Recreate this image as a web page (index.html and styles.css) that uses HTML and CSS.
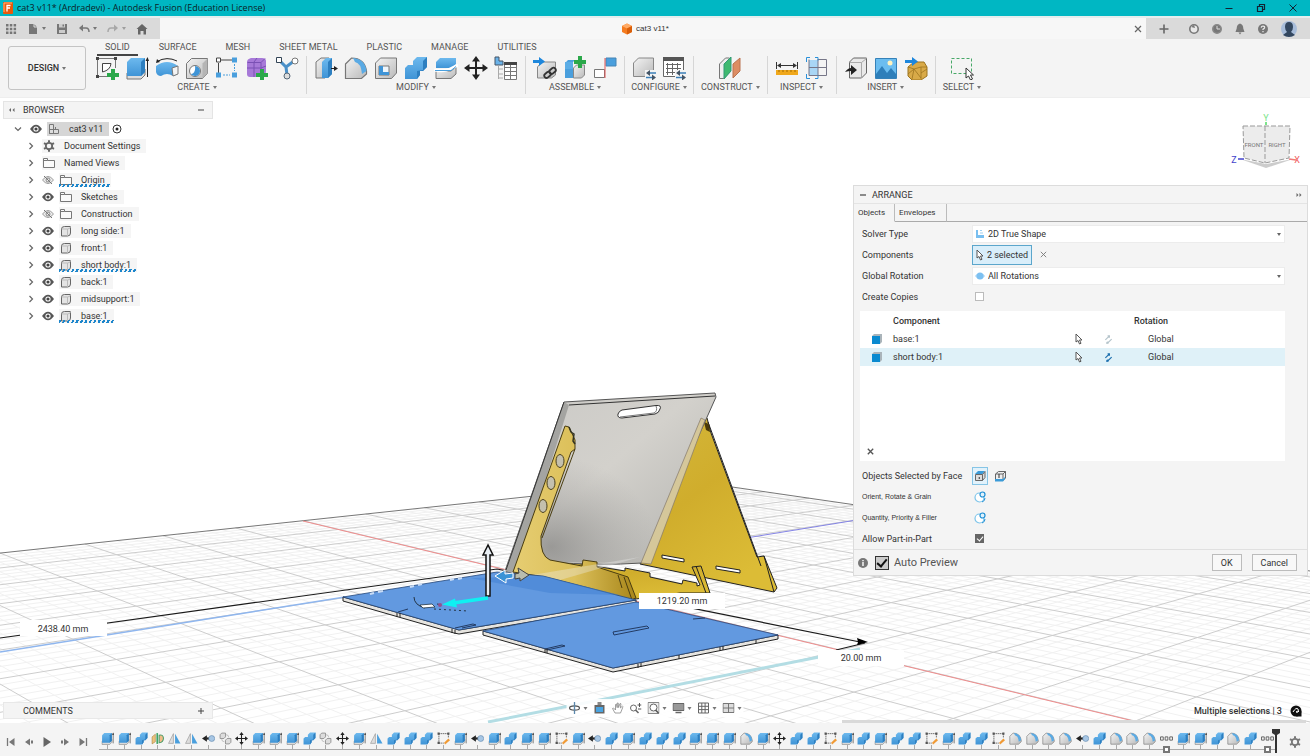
FILE: index.html
```
<!DOCTYPE html>
<html lang="en">
<head>
  <meta charset="UTF-8" />
  <meta name="viewport" content="width=device-width, initial-scale=1.0" />
  <title>cat3 v11* - Autodesk Fusion</title>
  <link rel="stylesheet" href="styles.css">
</head>
<body>
  <svg class="defs" aria-hidden="true">
    <defs>
      <linearGradient id="gBlue" x1="0" y1="0" x2="0" y2="1"><stop offset="0" stop-color="#6db9ee"/><stop offset="1" stop-color="#3f94d6"/></linearGradient>
      <linearGradient id="gGray" x1="0" y1="0" x2="1" y2="1"><stop offset="0" stop-color="#f4f4f4"/><stop offset="1" stop-color="#b9b9b9"/></linearGradient>
      <linearGradient id="gPanel" x1="0" y1="0" x2="1" y2="1"><stop offset="0" stop-color="#cac9c6"/><stop offset=".45" stop-color="#d3d1cc"/><stop offset=".8" stop-color="#bdbcb8"/><stop offset="1" stop-color="#a5a4a1"/></linearGradient>
      <linearGradient id="gYellow" x1="0" y1="0" x2=".6" y2="1"><stop offset="0" stop-color="#d4b83c"/><stop offset=".5" stop-color="#d0ad2c"/><stop offset="1" stop-color="#dcbc36"/></linearGradient>
      <linearGradient id="gSide" x1="0" y1="0" x2="1" y2="0"><stop offset="0" stop-color="#e6cd72"/><stop offset=".5" stop-color="#dcc05a"/><stop offset="1" stop-color="#a8861a"/></linearGradient>
      <radialGradient id="gShade" cx=".22" cy=".85" r=".5"><stop offset="0" stop-color="#666" stop-opacity=".5"/><stop offset="1" stop-color="#888" stop-opacity="0"/></radialGradient>
    </defs>

    <!-- ribbon -->
    <symbol id="i-sketch" viewBox="0 0 24 24"><path d="M2 2.500H20.500V12M2.500 2.500V21M2.500 20.500H13" fill="none" stroke="#777"/><path d="M1 1h3v3H1zM19 1h3v3h-3zM1 19h3v3H1z" fill="#444"/><path d="M7.500 16V7.500H16Q15.500 14 7.500 16z" fill="#fff" stroke="#444"/><path d="M16 13h4v4h4v4h-4v4h-4v-4h-4v-4h4z" fill="#2ba84a"/></symbol>
    <symbol id="i-extrude" viewBox="0 0 24 24"><path d="M2 17h15l3-4v6l-4 4H2z" fill="#ddd" stroke="#777"/><path d="M2 6l4-4h14v14l-4 4H2z" fill="url(#gBlue)"/><path d="M16 6l4-4v14l-4 4z" fill="#2d7fc0"/><path d="M22.500 21V3" stroke="#222"/><path d="M20.500 5l2-4 1.500 4z" fill="#222"/></symbol>
    <symbol id="i-revolve" viewBox="0 0 24 24"><path d="M1 10Q12 2 23 10v7q-2 3-5 3-6-4-12 0-4 0-5-4z" fill="url(#gBlue)"/><path d="M17 12l6-2v8l-5 2z" fill="#f3f3f3" stroke="#777"/><path d="M2 5.500Q12 0 22 5" fill="none" stroke="#222"/><path d="M2 3l-1 4 4-1z" fill="#222"/></symbol>
    <symbol id="i-hole" viewBox="0 0 24 24"><path d="M1.500 7.500l5-5h16v15l-5 5h-16z" fill="url(#gGray)" stroke="#777"/><path d="M17.500 7.500l5-5v15l-5 5z" fill="#b5b5b5"/><circle cx="10" cy="15" r="5.500" fill="#fff" stroke="#777"/><path d="M10 10a5 5 0 1 1-4 8q5-1 4-8z" fill="#3f94d6"/></symbol>
    <symbol id="i-pattern" viewBox="0 0 24 24"><path d="M6 4h12M3.500 7v11" stroke="#444" fill="none"/><path d="M1.500 2h4v4h-4z" fill="#fff" stroke="#444"/><path d="M17 1.500h5v5h-5zM17 16.500h5v5h-5zM1 16.500h5v5H1z" fill="#4a9fdd"/><path d="M8 19h7M19.500 8v7" stroke="#4a9fdd" stroke-dasharray="2 1"/></symbol>
    <symbol id="i-form" viewBox="0 0 24 24"><path d="M2 6q0-3 4-4h11q4 0 4 3v10q0 5-5 6H5q-3 0-3-3z" fill="#a779d8"/><path d="M2 12h14l5-2M9 6v15M2.500 6.500H16l4-4M16 6.500V20M9 6l3-4" stroke="#7a50b4" fill="none"/><path d="M15 13h4v4h4v4h-4v4h-4v-4h-4v-4h4z" fill="#2ba84a"/></symbol>
    <symbol id="i-branch" viewBox="0 0 24 24"><path d="M4 4l7 7 8-6M11 11l1 8" fill="none" stroke="#4a90c8" stroke-width="3"/><path d="M1.500 1.500h5v5h-5z" fill="#fff" stroke="#345"/><circle cx="20" cy="5" r="3" fill="#fff" stroke="#777"/><circle cx="12" cy="20" r="3" fill="#ddd" stroke="#567"/></symbol>
    <symbol id="i-press" viewBox="0 0 24 24"><path d="M2 6l5-4h8v16l-4 4H2z" fill="url(#gGray)" stroke="#777"/><path d="M8 6l4-4h6v16l-4 4H8z" fill="url(#gBlue)"/><path d="M14 6l4-4v16l-4 4z" fill="#2d7fc0"/><path d="M17 12.500h5" stroke="#222"/><path d="M20 10l4 2.500-4 2.500z" fill="#222"/></symbol>
    <symbol id="i-fillet" viewBox="0 0 24 24"><path d="M1.500 8l6-6q13 0 15 13v3l-5 4.500h-16z" fill="url(#gGray)" stroke="#777" stroke-width="1.200"/><path d="M9 2q12 1 13.500 13l-4.500 3Q17 7 11 6z" fill="#5aaae4"/></symbol>
    <symbol id="i-shell" viewBox="0 0 24 24"><path d="M1.500 7l5-5h16v15l-5 5.500h-16z" fill="url(#gGray)" stroke="#777"/><path d="M5 10h10v9H5z" fill="#eef6fc" stroke="#777"/><path d="M5 10h4v6h6v3H5z" fill="#3f94d6"/></symbol>
    <symbol id="i-combine" viewBox="0 0 24 24"><path d="M1 12l3-3h5V5l4-4h10v10l-4 4h-3v4l-3 4H1z" fill="url(#gBlue)"/><path d="M19 5l4-4v10l-4 4h-3v4l-3 4v-8l6-1z" fill="#2d7fc0"/></symbol>
    <symbol id="i-split" viewBox="0 0 24 24"><path d="M2 6l4-4h16v6l-4 4H2z" fill="url(#gBlue)"/><path d="M2 15h15l5-4v7l-5 4.500H2z" fill="url(#gGray)" stroke="#777"/><path d="M0 14q10 2 16-1t8-4" fill="none" stroke="#fff" stroke-width="3"/><path d="M1 14.500h16l5-4" fill="none" stroke="#4a9fdd"/></symbol>
    <symbol id="i-move" viewBox="0 0 24 24"><path d="M12 4v16M4 12h16" stroke="#222" stroke-width="2"/><path d="M12 0l4 5.500H8zM12 24l4-5.500H8zM0 12l5.500-4v8zM24 12l-5.500-4v8z" fill="#222"/></symbol>
    <symbol id="i-params" viewBox="0 0 24 24"><path d="M1 1h4v4h4v4H1z" fill="#6ab2e8" stroke="#456"/><path d="M4.500 10v13M4.500 13H9M4.500 18H9M4.500 22H9" stroke="#aaa" fill="none"/><path d="M10.500 7.500h12v16h-12zM10.500 11.500h12M10.500 15.500h12M10.500 19.500h12M16.500 9v14" fill="#fff" stroke="#777"/><path d="M10 6h13v3H10z" fill="#444"/></symbol>
    <symbol id="i-link" viewBox="0 0 24 24"><path d="M4.500 11l4-5h14v13l-4 3h-14z" fill="url(#gGray)" stroke="#888"/><path d="M0 4h6V1l6 4.500L6 10V7H0z" fill="#1e87dc"/><g fill="none" stroke="#333" stroke-width="1.800"><rect x="11" y="17" width="7" height="4.500" rx="2.200" transform="rotate(-40 14 19)"/><rect x="16" y="13" width="7" height="4.500" rx="2.200" transform="rotate(-40 19 15)"/></g></symbol>
    <symbol id="i-newcomp" viewBox="0 0 24 24"><path d="M2 7l3-3h7l-3 3v6H2z" fill="#4a9fdd"/><path d="M2 6h8v7H2z" fill="#5cade6"/><path d="M2 13h8v9H2z" fill="#4a9fdd"/><path d="M10.500 12l3-3h8v10l-3 3h-8z" fill="url(#gGray)" stroke="#888"/><path d="M15 0h4v4h4v4h-4v4h-4V8h-4V4h4z" fill="#2ba84a"/></symbol>
    <symbol id="i-joint" viewBox="0 0 24 24"><path d="M1.500 13.500h10v8h-10z" fill="#fff" stroke="#777"/><path d="M13 2h10v8H13z" fill="#4a9fdd" stroke="#4785b5"/><path d="M12 2v20" stroke="#e25555"/></symbol>
    <symbol id="i-config" viewBox="0 0 24 24"><path d="M1.500 7l5-5h15v12l-5 6.500h-15z" fill="url(#gGray)" stroke="#888"/><path d="M13 14h11v10H13z" fill="#f4f4f4"/><path d="M16 17h8M14 21.500h7" stroke="#3a7fb8" stroke-width="1.500"/><path d="M14 17l4-3v6zM24 21.500l-4-3v6z" fill="#456"/></symbol>
    <symbol id="i-table" viewBox="0 0 24 24"><path d="M1.500 1.500h20v19h-20z" fill="#fff" stroke="#666"/><path d="M1 1h21v4H1z" fill="#555"/><path d="M4 8.500h15M4 12.500h15M4 16.500h9M5.500 7v12M10.500 7v12M15.500 7v7" stroke="#666"/><path d="M13 14h11v10H13z" fill="#f4f4f4"/><path d="M16 17h8M14 21.500h7" stroke="#3a7fb8" stroke-width="1.500"/><path d="M14 17l4-3v6zM24 21.500l-4-3v6z" fill="#456"/></symbol>
    <symbol id="i-plane" viewBox="0 0 24 24"><path d="M1.500 8l6-6h4v14l-6 6.500h-4z" fill="#eee" stroke="#777"/><path d="M6 8l7-7v14l-7 8z" fill="#3fb970" stroke="#397"/><path d="M15 8l7-6v13l-7 7z" fill="#dd8d63" stroke="#b97350"/></symbol>
    <symbol id="i-measure" viewBox="0 0 24 24"><path d="M1.500 6v7M22.500 6v7M3 9.500h18" stroke="#333"/><path d="M2 9.500l4-2.500v5zM22 9.500l-4-2.500v5z" fill="#333"/><path d="M1 14h22v5H1z" fill="#f0a81c"/><path d="M4 14v2M8 14v2M12 14v2M16 14v2M20 14v2" stroke="#a36b00"/></symbol>
    <symbol id="i-section" viewBox="0 0 24 24"><path d="M4 4h9v16H4z" fill="#a9d6f5"/><path d="M13 3.500h8.500v16H4M4 11.500h17.500M13 3v17M4 3.500v16" fill="none" stroke="#778"/><path d="M5 1.500H1.500V6M1.500 18v4.500H5M10 1.500h3v3M10 22.500h3v-3" fill="none" stroke="#2a90d9"/></symbol>
    <symbol id="i-insert" viewBox="0 0 24 24"><path d="M5.500 6l4-4h13v15l-5 5h-12z" fill="#e9e9e9" stroke="#666"/><path d="M5.500 6.500h12v15M17.500 6.500l5-4" fill="none" stroke="#aaa"/><path d="M1 16q3-4 6-4V9l6 5-6 5v-4q-3 0-6 1z" fill="#222"/></symbol>
    <symbol id="i-canvas" viewBox="0 0 24 24"><path d="M1.500 2.500h21v20h-21z" fill="#6bbdf0" stroke="#3581b8"/><path d="M2 18l6-8 5 7 4-5 5 6v4H2z" fill="#2e7fba"/><circle cx="16" cy="7" r="2.500" fill="#fff3c0"/></symbol>
    <symbol id="i-mesh" viewBox="0 0 24 24"><path d="M4 11l6-5h10l3 5v9l-6 4H8l-4-4z" fill="#d9aa48" stroke="#9c7420"/><path d="M4 11l6 2 7-2 6 0M10 13l-2 10M17 11l0 12M10 13l7 9M4 18l6-5M17 17l6-4" fill="none" stroke="#9c7420" stroke-width=".8"/><path d="M1 4h7V1l6 4.500L8 10V7H1z" fill="#1e87dc"/></symbol>
    <symbol id="i-select" viewBox="0 0 24 24"><path d="M1.500 2.500h20v15h-20z" fill="none" stroke="#48a868" stroke-dasharray="3 2"/><path d="M16 12v10l2.500-2 2 4 2-1-2-4h3z" fill="#fff" stroke="#333"/></symbol>

    <!-- timeline only -->
    <symbol id="i-mirror" viewBox="0 0 24 24"><path d="M10 3v18H1z" fill="#ddd" stroke="#888"/><path d="M13 3v18h10z" fill="#4a9fdd"/></symbol>
    <symbol id="i-remove" viewBox="0 0 24 24"><path d="M8 12h8" stroke="#222" stroke-width="4"/><path d="M0 12l9-6v12z" fill="#222"/><circle cx="18" cy="12" r="5.500" fill="#a7c6e4" stroke="#567ea6"/></symbol>
    <symbol id="i-rigid" viewBox="0 0 24 24"><path d="M2 5l3-3h7v7l-3 3H2zM12 15l3-3h7v7l-3 3h-7z" fill="#ddd" stroke="#888" stroke-width="1.500"/><path d="M5 13q0 5 5 5M13 5q5 0 5 5" stroke="#999" fill="none"/></symbol>
    <symbol id="i-turn" viewBox="0 0 24 24"><path d="M2 9l6-5v14l-6 4z" fill="#ecc27d" stroke="#a67b34"/><path d="M10 2h3v20h-3z" fill="#3fa467"/><path d="M15 6q7-2 8 5 0 8-8 9z" fill="#f0bc88" stroke="#4e9e6b" stroke-width="2"/></symbol>
    <symbol id="i-sk" viewBox="0 0 24 24"><path d="M2.500 3h19M3.500 3v18M2.500 20.500h10M21 3v8" stroke="#555" fill="none" stroke-width="1.500" stroke-dasharray="3 1"/><path d="M1 1h4v4H1zM19 1h4v4h-4zM1 18h4v4H1z" fill="#555"/><path d="M13 20l8-8 3 3-9 8z" fill="#f09a35"/></symbol>
    <symbol id="i-dots" viewBox="0 0 24 24"><path d="M1 9h5v6H1zM9.500 9h5v6h-5zM18 9h5v6h-5z" fill="none" stroke="#555" stroke-width="1.600"/></symbol>

    <!-- small ui glyphs -->
    <symbol id="i-eye" viewBox="0 0 12 10"><path d="M0 5q6-8.500 12 0-6 8.500-12 0z" fill="#555"/><circle cx="6" cy="5" r="2.600" fill="#fff"/><circle cx="6" cy="5" r="1.600" fill="#444"/></symbol>
    <symbol id="i-eyeoff" viewBox="0 0 12 10"><path d="M.5 5q5.500-7 11 0-5.500 7-11 0z" fill="#eee" stroke="#999"/><circle cx="6" cy="5" r="2" fill="none" stroke="#888"/><path d="M2 1l8 8" stroke="#777"/></symbol>
    <symbol id="i-folder" viewBox="0 0 12 10"><path d="M.5 9.500v-9h4v2h7v7zM.5 2.500h4" fill="#fafafa" stroke="#777"/></symbol>
    <symbol id="i-body" viewBox="0 0 12 12"><path d="M1.500 4q0-2.500 3-2.500h6V8q0 3-3 3h-6z" fill="#e4e4e4" stroke="#666"/><path d="M1.500 4h6q3 0 3-2.500M7.500 4v7" fill="none" stroke="#bbb"/></symbol>
    <symbol id="i-asm" viewBox="0 0 12 12"><path d="M1.500 1.500h4v9h-4zM1.500 6.500h9v4h-9zM7.500 4v2.500" fill="#ddd" stroke="#777"/></symbol>
    <symbol id="i-gear" viewBox="0 0 12 12"><circle cx="6" cy="6" r="3.200" fill="none" stroke="currentColor" stroke-width="1.800"/><path d="M6 .3v2M6 9.700v2M1 3.100l1.800 1M9.200 7.900l1.800 1M1 8.900l1.800-1M9.200 4.100l1.800-1" stroke="currentColor" stroke-width="2"/></symbol>
    <symbol id="i-chev" viewBox="0 0 8 8"><path d="M2.500 1l3 3-3 3" fill="none" stroke="#666" stroke-width="1.200"/></symbol>
    <symbol id="i-cursor" viewBox="0 0 8 12"><path d="M1 1v8l2-1.500L4.500 11 6 10.300 4.500 7H7z" fill="#fff" stroke="#555"/></symbol>
    <symbol id="i-rot" viewBox="0 0 10 10"><path d="M1.500 5.500l4-4M4.500 8.500l4-4M4 1h2v2M4 9H2.500" fill="none" stroke="currentColor" stroke-width="1.300"/><circle cx="4" cy="8.500" r="1.300" fill="currentColor"/></symbol>
    <symbol id="i-cell" viewBox="0 0 12 12"><path d="M1 3l2-2h8v8l-2 2z" fill="#aab4ba"/><path d="M1 3h8v8H1z" fill="#0a8ad0"/></symbol>
    <symbol id="i-face" viewBox="0 0 12 12"><path d="M1 4l3-3h7L8.500 4z" fill="#3b9bd8"/><path d="M1.500 4.500h7v6h-7zM8.500 4.500L11 1.500v6l-2.500 3" fill="#ddd" stroke="#666"/><path d="M4 8l2-1v2z" fill="#333"/></symbol>
    <symbol id="i-face2" viewBox="0 0 12 12"><path d="M1.500 4l3-2.500h7L9 4zM1.500 4v6.500H9V4M9 10.500L11.500 8V1.500" fill="#eee" stroke="#666"/><path d="M1 9h8l2-2v2l-2 2.500H1z" fill="#3b9bd8"/><path d="M5 4v4" stroke="#333"/></symbol>
    <symbol id="i-orb" viewBox="0 0 12 12"><circle cx="5.500" cy="6.500" r="4.500" fill="#fff" stroke="#7cc4ea" stroke-width="1.200"/><circle cx="8.500" cy="3.500" r="2.500" fill="#dff1fb" stroke="#1e8fd5" stroke-width="1.200"/><path d="M11 7q0 3-3 4" stroke="#1e8fd5" fill="none"/></symbol>
  </svg>

  <div class="app">
    <header class="titlebar">
      <svg class="logo" viewBox="0 0 10 12"><rect width="10" height="12" rx="1" fill="#e8590c"/><path d="M1 10V1h8" fill="none" stroke="#ffb37a"/><path d="M4 9.500v-6h3.500M4 6h3" stroke="#fff" stroke-width="1.300" fill="none"/></svg>
      <span class="app-title">cat3 v11* (Ardradevi) - Autodesk Fusion (Education License)</span>
      <div class="win-buttons">
        <button type="button" aria-label="Minimize"><svg viewBox="0 0 10 10"><path d="M1.500 5.500h7" stroke="#123"/></svg></button>
        <button type="button" aria-label="Restore"><svg viewBox="0 0 10 10"><path d="M1.500 3.500h5v5h-5zM3.500 3.500v-2h5v5h-2" fill="none" stroke="#123" stroke-width="1.200"/></svg></button>
        <button type="button" aria-label="Close"><svg viewBox="0 0 10 10"><path d="M1.500 1.500l7 7M8.500 1.500l-7 7" stroke="#123"/></svg></button>
      </div>
    </header>

    <div class="docbar">
      <div class="quick">
        <button type="button" aria-label="Data panel"><svg viewBox="0 0 12 12"><path d="M1 1h2.500v2.500H1zM4.800 1h2.500v2.500H4.800zM8.600 1h2.500v2.500H8.600zM1 4.800h2.500v2.500H1zM4.800 4.800h2.500v2.500H4.800zM8.600 4.800h2.500v2.500H8.600zM1 8.600h2.500v2.500H1zM4.800 8.600h2.500v2.500H4.800zM8.600 8.600h2.500v2.500H8.600z" fill="#777"/></svg></button>
        <button type="button" class="drop" aria-label="File"><svg viewBox="0 0 12 12"><path d="M2 1h5l3 3v7H2z" fill="#777"/><path d="M7 1v3h3" stroke="#ddd" fill="none"/></svg></button>
        <button type="button" aria-label="Save"><svg viewBox="0 0 12 12"><path d="M1 1h10v10H1z" fill="#777"/><path d="M3 1h6v3.500H3zM3 7h6v3H3z" fill="#ccc"/><path d="M6.500 1.500h1.500v2H6.500z" fill="#777"/></svg></button>
        <button type="button" class="drop" aria-label="Undo"><svg viewBox="0 0 12 12"><path d="M2 5h6q3 0 3 4" fill="none" stroke="#777" stroke-width="1.500"/><path d="M1 5l4-3.500v7z" fill="#777"/></svg></button>
        <button type="button" class="drop dim" aria-label="Redo"><svg viewBox="0 0 12 12"><path d="M10 5H4Q1 5 1 9" fill="none" stroke="#888" stroke-width="1.500"/><path d="M11 5L7 1.500v7z" fill="#888"/></svg></button>
        <button type="button" aria-label="Home"><svg viewBox="0 0 12 12"><path d="M6 1l5.500 5H10v5.500H7.500V8h-3v3.500H2V6H.5z" fill="#666"/></svg></button>
      </div>
      <div class="doctab">
        <svg viewBox="0 0 12 12"><path d="M6 .5l5 2.500v6L6 11.500 1 9V3z" fill="#f57c1f"/><path d="M1 3l5 2.500L11 3 6 .5z" fill="#ffab66"/><path d="M6 5.500v6L11 9V3z" fill="#d95f0a"/></svg>
        <span>cat3 v11*</span>
        <button type="button" aria-label="Close tab"><svg viewBox="0 0 10 10"><path d="M2 2l6 6M8 2L2 8" stroke="#666" stroke-width="1.200"/></svg></button>
      </div>
      <div class="account">
        <button type="button" class="add" aria-label="New tab"><svg viewBox="0 0 12 12"><path d="M6 1.500v9M1.500 6h9" stroke="#666" stroke-width="1.600"/></svg></button>
        <button type="button" aria-label="Extensions"><svg viewBox="0 0 12 12"><circle cx="6" cy="6" r="4.200" fill="#e8e8e8" stroke="#777" stroke-width="1.600"/><path d="M3 4l3-2 1 3z" fill="#777"/></svg></button>
        <button type="button" aria-label="Job status"><svg viewBox="0 0 12 12"><circle cx="6" cy="6" r="4.200" fill="#777" stroke="#888" stroke-width="1.600"/><path d="M6 3v3h3" stroke="#ddd" fill="none"/></svg></button>
        <button type="button" aria-label="Notifications"><svg viewBox="0 0 12 12"><path d="M6 .5q3.300 1 3.300 5l1.200 3.500h-9L2.700 5.500Q2.700 1.500 6 .5zM4.500 9.500h3L6 11.500z" fill="#777"/></svg></button>
        <button type="button" aria-label="Help"><svg viewBox="0 0 12 12"><circle cx="6" cy="6" r="5" fill="#777"/><path d="M4.200 4.700Q4.500 3 6 3q1.800.2 1.600 1.700Q7.400 5.700 6 6.200V7M6 8v1.300" stroke="#eee" stroke-width="1.200" fill="none"/></svg></button>
        <button type="button" class="avatar" aria-label="Profile"><svg viewBox="0 0 18 18"><circle cx="9" cy="9" r="8" fill="#a8bdda"/><path d="M9 2q4 0 4 5 0 3-2 5l4 3q-6 4-12 0l4-3Q5 10 5 7q0-5 4-5z" fill="#33475f"/></svg></button>
      </div>
    </div>

    <div class="ribbon">
      <button type="button" class="workspace">DESIGN<i class="caret"></i></button>
      <div class="ribbon-main">
        <nav class="tabs">
          <button type="button" class="active">SOLID</button>
          <button type="button">SURFACE</button>
          <button type="button">MESH</button>
          <button type="button">SHEET METAL</button>
          <button type="button">PLASTIC</button>
          <button type="button">MANAGE</button>
          <button type="button">UTILITIES</button>
        </nav>
        <div class="groups">
          <div class="group">
            <div class="tools">
              <button type="button" aria-label="Create sketch"><svg><use href="#i-sketch"/></svg></button>
              <button type="button" aria-label="Extrude"><svg><use href="#i-extrude"/></svg></button>
              <button type="button" aria-label="Revolve"><svg><use href="#i-revolve"/></svg></button>
              <button type="button" aria-label="Hole"><svg><use href="#i-hole"/></svg></button>
              <button type="button" aria-label="Pattern"><svg><use href="#i-pattern"/></svg></button>
              <button type="button" aria-label="Create form"><svg><use href="#i-form"/></svg></button>
              <button type="button" aria-label="Automated modeling"><svg><use href="#i-branch"/></svg></button>
            </div>
            <button type="button" class="menu">CREATE<i class="caret"></i></button>
          </div>
          <div class="group">
            <div class="tools">
              <button type="button" aria-label="Press pull"><svg><use href="#i-press"/></svg></button>
              <button type="button" aria-label="Fillet"><svg><use href="#i-fillet"/></svg></button>
              <button type="button" aria-label="Shell"><svg><use href="#i-shell"/></svg></button>
              <button type="button" aria-label="Combine"><svg><use href="#i-combine"/></svg></button>
              <button type="button" aria-label="Split"><svg><use href="#i-split"/></svg></button>
              <button type="button" aria-label="Move"><svg><use href="#i-move"/></svg></button>
              <button type="button" aria-label="Parameters"><svg><use href="#i-params"/></svg></button>
            </div>
            <button type="button" class="menu">MODIFY<i class="caret"></i></button>
          </div>
          <div class="group">
            <div class="tools">
              <button type="button" aria-label="Insert derive"><svg><use href="#i-link"/></svg></button>
              <button type="button" aria-label="New component"><svg><use href="#i-newcomp"/></svg></button>
              <button type="button" aria-label="Joint"><svg><use href="#i-joint"/></svg></button>
            </div>
            <button type="button" class="menu">ASSEMBLE<i class="caret"></i></button>
          </div>
          <div class="group">
            <div class="tools">
              <button type="button" aria-label="Configure"><svg><use href="#i-config"/></svg></button>
              <button type="button" aria-label="Configuration table"><svg><use href="#i-table"/></svg></button>
            </div>
            <button type="button" class="menu">CONFIGURE<i class="caret"></i></button>
          </div>
          <div class="group wide">
            <div class="tools">
              <button type="button" aria-label="Offset plane"><svg><use href="#i-plane"/></svg></button>
            </div>
            <button type="button" class="menu">CONSTRUCT<i class="caret"></i></button>
          </div>
          <div class="group">
            <div class="tools">
              <button type="button" aria-label="Measure"><svg><use href="#i-measure"/></svg></button>
              <button type="button" aria-label="Section analysis"><svg><use href="#i-section"/></svg></button>
            </div>
            <button type="button" class="menu">INSPECT<i class="caret"></i></button>
          </div>
          <div class="group">
            <div class="tools">
              <button type="button" aria-label="Insert component"><svg><use href="#i-insert"/></svg></button>
              <button type="button" aria-label="Canvas"><svg><use href="#i-canvas"/></svg></button>
              <button type="button" aria-label="Insert mesh"><svg><use href="#i-mesh"/></svg></button>
            </div>
            <button type="button" class="menu">INSERT<i class="caret"></i></button>
          </div>
          <div class="group wide last">
            <div class="tools">
              <button type="button" aria-label="Select"><svg><use href="#i-select"/></svg></button>
            </div>
            <button type="button" class="menu">SELECT<i class="caret"></i></button>
          </div>
        </div>
      </div>
    </div>

    <main class="viewport">
      <svg class="scene" viewBox="0 98 1310 625" preserveAspectRatio="xMidYMid slice">
        <path id="gridMinor" class="grid-minor"/>
        <path id="gridMajor" class="grid-major"/>
        <path id="gridEdge" class="grid-edge"/>
        <path d="M303 521L1146 724" stroke="#ef8d8d"/>
        <path d="M740 539L906 512" stroke="#8484e6"/>
        <path d="M0 652L345 597" stroke="#8fb6ee" stroke-width="1.500"/>
        <path d="M488 722L860 649" stroke="#b3dde4" stroke-width="3" fill="none"/>
        <path d="M0 638L497 569L865 643L836 650" stroke="#1a1a1a" fill="none" stroke-width="1.200"/>
        <path d="M868 642l-11-4 1 4-1 3z"/>

        <!-- right leg -->
        <path d="M701 418L707 418L711 433L757 557L764 556L777 588L774 592L640 564z" fill="url(#gYellow)" stroke="#222"/>
        <path d="M708 422L761 566M764 556L774 592" stroke="#222" fill="none"/>
        <path d="M704 422l5 2 1 8-4-2z" fill="#4b3b08"/>
        <path d="M662 555l22 4v3l-22-4zM716 566l24 4v3l-24-4z" fill="#fff" stroke="#222"/>
        <!-- front rail -->
        <path d="M549 560L582 564L625 571V568L650 573V577L682 584L683 580L697 583V586L700 585L692 567L701 566L710 593L680 593L636 599L590 582L514 573z" fill="url(#gYellow)" stroke="#222"/>
        <path d="M696 566L706 593" stroke="#222"/>
        <!-- back panel -->
        <path d="M564 402L715 393L716 397L642 563Q600 566 548 562L516 574L505 571z" fill="url(#gPanel)" stroke="#555"/>
        <path d="M564 402L715 393L716 397L642 563L548 562L516 574L505 571z" fill="url(#gShade)"/>
        <path d="M564 402L569 405L516 574L505 571z" fill="#a4a4a1"/>
        <path d="M569 405L715 396M564 402L506 570" stroke="#333" fill="none"/>
        <path d="M622 410L656 405.500Q662 405 660 409Q659 413 655 414L622 418Q617 418 618 414Q619 411 622 410z" fill="#fff" stroke="#333"/>
        <path d="M656 406q2 5-2 7l-34 4" fill="none" stroke="#777"/>
        <path d="M701 418L705 420L651 564L641 563z" fill="#d5c79a" stroke="#84796a" stroke-width=".7"/>
        <!-- left support -->
        <path d="M565 426L569 427L575 440V449L571 452L541 536Q540 556 550 560L582 566L583 560L597 562V567L628 577L636 598L631 600Q590 588 545 577L513 572z" fill="url(#gSide)" stroke="#4a3d10"/>
        <path d="M575 449L542 538M618 575L622 588M624 577L632 600" stroke="#4a3d10" fill="none"/>
        <path d="M569 427l2 5 3 2-1 7 2 3" stroke="#332" fill="none" stroke-width="1.500"/>
        <g fill="#c4c0ae" stroke="#4a4020"><ellipse cx="560" cy="461" rx="4" ry="6.500"/><ellipse cx="551" cy="483" rx="4" ry="6.500"/><ellipse cx="543" cy="506" rx="4" ry="6.500"/></g>
        <path d="M520 577L640 557L560 580z" fill="#eee" opacity=".35"/>

        <!-- flat parts -->
        <path d="M343 597L459 630L636 600V604L459 634L454 633L343 601z" fill="#e6e4df" stroke="#222"/>
        <path d="M343 597L497 572L543 576L636 600L459 630z" fill="#6299e0" stroke="#26487a" stroke-width=".8"/>
        <path d="M470 578L543 576L620 595L550 593z" fill="#3f7fd2" opacity=".5"/>
        <path d="M483 631L613 668L778 635V639L613 672L483 635z" fill="#e6e4df" stroke="#222"/>
        <path d="M483 631L540 620L636 602L778 635L613 668z" fill="#6299e0" stroke="#26487a" stroke-width=".8"/>
        <path d="M613 632l34-6 2 2-35 7zM545 649l17-4 3 1-18 4M693 619l12-1M455 628l18-4 3 1-14 3M398 612l10-3" fill="none" stroke="#233b63"/>
        <path d="M545 649v4M547 649v4M397 613v4M400 613v4M452 629v4M455 630v4M638 664v4M641 663v4M679 655v4M720 647v4M723 646v4M756 640v3" stroke="#222"/>
        <path d="M370 594l4-1M378 592l5-1M410 587l4-1M418 585l4-1M450 580l4-1M458 579l4-1" stroke="#c9dcf6" stroke-width="2"/>
        <path d="M414 597q0 8 11 11" fill="none" stroke="#234"/>
        <path d="M420 605l12-1 3 3-12 1z" fill="#fff" stroke="#234" stroke-width=".8"/>
        <path d="M434 609l34 2M437 604l5 1" stroke="#234" stroke-dasharray="2 3" fill="none"/>
        <circle cx="440" cy="605" r="2" fill="#93508f"/>

        <!-- manipulators -->
        <path d="M488 545l-5 10h3v41h4v-41h3z" fill="#e8eef4" stroke="#111" stroke-width="1.500"/>
        <path d="M488 598L453 603" stroke="#0ff0f2" stroke-width="3.500"/>
        <path d="M442 604.500l13-6 2 9z" fill="#0ff0f2"/>
        <path d="M495 576l10-6v4l8-1v5l-7 1v4z" fill="#3b93d6" stroke="#fff"/>
        <path d="M529 575l-11-7 1 5-4 1v5l5-1v3z" fill="#b9bcae" stroke="#444"/>

        <g class="dims">
          <path d="M20 620h87v16H20zM639 593h86v16h-86zM818 650h86v16h-86z"/>
          <text x="63" y="632">2438.40 mm</text>
          <text x="682" y="604">1219.20 mm</text>
          <text x="861" y="661">20.00 mm</text>
        </g>
      </svg>

      <aside class="browser">
        <div class="panel-head">
          <button type="button" aria-label="Collapse browser"><svg viewBox="0 0 10 10"><path d="M4 3L2 5l2 2zM7.500 3l-2 2 2 2z" fill="#666"/></svg></button>
          <span>BROWSER</span>
          <button type="button" class="end" aria-label="Minimize browser"><svg viewBox="0 0 10 10"><path d="M2 5h6" stroke="#444"/></svg></button>
        </div>
        <ul class="tree">
          <li class="root"><svg class="chev open"><use href="#i-chev"/></svg><svg class="eye"><use href="#i-eye"/></svg><span class="node"><svg><use href="#i-asm"/></svg><span>cat3 v11</span></span><svg class="target" viewBox="0 0 10 10"><circle cx="5" cy="5" r="4" fill="#fff" stroke="#333"/><circle cx="5" cy="5" r="1.500" fill="#222"/></svg></li>
          <li><svg class="chev"><use href="#i-chev"/></svg><span class="node"><svg><use href="#i-gear"/></svg><span>Document Settings</span></span></li>
          <li><svg class="chev"><use href="#i-chev"/></svg><span class="node"><svg><use href="#i-folder"/></svg><span>Named Views</span></span></li>
          <li><svg class="chev"><use href="#i-chev"/></svg><svg class="eye"><use href="#i-eyeoff"/></svg><span class="node marked"><svg><use href="#i-folder"/></svg><span>Origin</span></span></li>
          <li><svg class="chev"><use href="#i-chev"/></svg><svg class="eye"><use href="#i-eye"/></svg><span class="node"><svg><use href="#i-folder"/></svg><span>Sketches</span></span></li>
          <li><svg class="chev"><use href="#i-chev"/></svg><svg class="eye"><use href="#i-eyeoff"/></svg><span class="node"><svg><use href="#i-folder"/></svg><span>Construction</span></span></li>
          <li><svg class="chev"><use href="#i-chev"/></svg><svg class="eye"><use href="#i-eye"/></svg><span class="node"><svg><use href="#i-body"/></svg><span>long side:1</span></span></li>
          <li><svg class="chev"><use href="#i-chev"/></svg><svg class="eye"><use href="#i-eye"/></svg><span class="node"><svg><use href="#i-body"/></svg><span>front:1</span></span></li>
          <li><svg class="chev"><use href="#i-chev"/></svg><svg class="eye"><use href="#i-eye"/></svg><span class="node marked"><svg><use href="#i-body"/></svg><span>short body:1</span></span></li>
          <li><svg class="chev"><use href="#i-chev"/></svg><svg class="eye"><use href="#i-eye"/></svg><span class="node"><svg><use href="#i-body"/></svg><span>back:1</span></span></li>
          <li><svg class="chev"><use href="#i-chev"/></svg><svg class="eye"><use href="#i-eye"/></svg><span class="node"><svg><use href="#i-body"/></svg><span>midsupport:1</span></span></li>
          <li><svg class="chev"><use href="#i-chev"/></svg><svg class="eye"><use href="#i-eye"/></svg><span class="node marked"><svg><use href="#i-body"/></svg><span>base:1</span></span></li>
        </ul>
      </aside>

      <svg class="viewcube" viewBox="0 0 72 62">
        <path d="M10 48l26 9 27-9-27 5z" fill="#999" opacity=".5"/>
        <path d="M13 15h22v37l-21-5zM35 15h25l-1 32-24 5z" fill="#ececec"/>
        <path d="M13 15h47l-1 32-24 5-21-5zM35 15v37" fill="none" stroke="#999" stroke-dasharray="5 2"/>
        <path d="M36 14v-3" stroke="#7be58a" stroke-width="2"/><path d="M8 48h6" stroke="#44c" stroke-width="1.500"/><path d="M59 48l7 1" stroke="#f07a7a" stroke-width="1.500"/>
        <text x="24" y="36">FRONT</text>
        <text x="47" y="36">RIGHT</text>
        <text x="36" y="10" class="axis y">Y</text>
        <text x="4" y="52" class="axis z">Z</text>
        <text x="67" y="52" class="axis x">X</text>
      </svg>

      <form class="arrange">
        <div class="arrange-head">
          <button type="button" aria-label="Collapse"><svg viewBox="0 0 10 10"><path d="M2 5h6" stroke="#444" stroke-width="1.200"/></svg></button>
          <span>ARRANGE</span>
          <button type="button" class="end" aria-label="Dock"><svg viewBox="0 0 10 10"><path d="M2.500 3l2 2-2 2zM5.500 3l2 2-2 2z" fill="#666"/></svg></button>
        </div>
        <div class="arrange-tabs">
          <button type="button" class="active">Objects</button>
          <button type="button">Envelopes</button>
        </div>
        <div class="arrange-body">
          <div class="row">
            <label for="solver">Solver Type</label>
            <div class="combo"><svg viewBox="0 0 10 10"><path d="M1 1h2v5h6v3H1z" fill="#79bff0"/><path d="M5 1h2v1H5zM5 3.500h3v1H5z" fill="#9fd0f2"/></svg><select id="solver"><option>2D True Shape</option></select></div>
          </div>
          <div class="row">
            <span>Components</span>
            <div class="picks"><button type="button" class="picked"><svg><use href="#i-cursor"/></svg>2 selected</button><button type="button" class="clear" aria-label="Clear selection"><svg viewBox="0 0 10 10"><path d="M2 2l6 6M8 2L2 8" stroke="#777"/></svg></button></div>
          </div>
          <div class="row">
            <label for="rotation">Global Rotation</label>
            <div class="combo"><svg viewBox="0 0 10 10"><circle cx="5" cy="5" r="3.500" fill="#7cc0f1"/><path d="M0 5l2-2v4zM10 5L8 3v4z" fill="#9fd0f4"/></svg><select id="rotation"><option>All Rotations</option></select></div>
          </div>
          <div class="row">
            <label for="copies">Create Copies</label>
            <input type="checkbox" id="copies">
          </div>
          <div class="list">
            <table>
              <thead><tr><th class="c-icon"></th><th class="c-name">Component</th><th class="c-act"></th><th class="c-act"></th><th class="c-rot">Rotation</th></tr></thead>
              <tbody>
                <tr><td><svg class="cell"><use href="#i-cell"/></svg></td><td>base:1</td><td><svg class="cur"><use href="#i-cursor"/></svg></td><td><svg class="rot off"><use href="#i-rot"/></svg></td><td class="val">Global</td></tr>
                <tr class="current"><td><svg class="cell"><use href="#i-cell"/></svg></td><td>short body:1</td><td><svg class="cur"><use href="#i-cursor"/></svg></td><td><svg class="rot"><use href="#i-rot"/></svg></td><td class="val">Global</td></tr>
              </tbody>
            </table>
            <button type="button" aria-label="Remove component"><svg viewBox="0 0 10 10"><path d="M2 2l6 6M8 2L2 8" stroke="#555" stroke-width="1.500"/></svg></button>
          </div>
          <div class="row">
            <span>Objects Selected by Face</span>
            <div class="faces"><button type="button" class="on" aria-label="Top face"><svg><use href="#i-face"/></svg></button><button type="button" aria-label="Bottom face"><svg><use href="#i-face2"/></svg></button></div>
          </div>
          <div class="row small">
            <span>Orient, Rotate &amp; Grain</span>
            <button type="button" class="orb" aria-label="Orient, rotate and grain"><svg><use href="#i-orb"/></svg></button>
          </div>
          <div class="row small">
            <span>Quantity, Priority &amp; Filler</span>
            <button type="button" class="orb" aria-label="Quantity, priority and filler"><svg><use href="#i-orb"/></svg></button>
          </div>
          <div class="row">
            <label for="pip">Allow Part-in-Part</label>
            <input type="checkbox" id="pip" checked>
          </div>
        </div>
        <div class="arrange-foot">
          <svg class="info" viewBox="0 0 10 10"><circle cx="5" cy="5" r="5" fill="#777"/><path d="M5 4v4M5 2v1.200" stroke="#fff" stroke-width="1.400"/></svg>
          <input type="checkbox" id="preview" class="big" checked>
          <label for="preview">Auto Preview</label>
          <button type="submit">OK</button>
          <button type="button">Cancel</button>
        </div>
      </form>

      <div class="comments"><span>COMMENTS</span><button type="button" aria-label="Add comment"><svg viewBox="0 0 10 10"><path d="M5 2v6M2 5h6" stroke="#444"/></svg></button></div>

      <div class="navbar">
        <button type="button" class="drop" aria-label="Orbit"><svg viewBox="0 0 12 12"><ellipse cx="6" cy="6" rx="5" ry="2.200" fill="none" stroke="#555" stroke-width="1.200"/><path d="M6 0v12" stroke="#5b87ab" stroke-width="1.300"/></svg></button>
        <button type="button" aria-label="Look at"><svg viewBox="0 0 12 12"><path d="M1 3h10v8.500H1z" fill="#666"/><path d="M2.500 5h7v5h-7z" fill="#4aa3e0"/><path d="M4 0h4v3H4z" fill="#888"/></svg></button>
        <button type="button" aria-label="Pan"><svg viewBox="0 0 12 12"><path d="M3.500 11L1 6.500l1-.5 2 2V2.500l1-.3.7 3.500V1h1l.3 4.500L8.500 1.500l1 .3L8.800 6 11 4l.6.6L9 11z" fill="#fff" stroke="#888" stroke-width=".8"/></svg></button>
        <button type="button" aria-label="Zoom"><svg viewBox="0 0 12 12"><circle cx="4" cy="6" r="3" fill="none" stroke="#666"/><path d="M6 8l3 3" stroke="#666" stroke-width="1.600"/><path d="M8 3h4M10 1v4M8.500 7H12" stroke="#555"/></svg></button>
        <button type="button" class="drop" aria-label="Fit"><svg viewBox="0 0 12 12"><path d="M.5.500h11v11H.5z" fill="#eee" stroke="#888"/><circle cx="6" cy="5.500" r="3.500" fill="#fff" stroke="#666"/><path d="M8 8l3 3" stroke="#555" stroke-width="1.500"/></svg></button>
        <button type="button" class="drop" aria-label="Display settings"><svg viewBox="0 0 12 12"><path d="M.5 1.500h11v7H.5z" fill="#999" stroke="#666"/><path d="M3 10.500h6" stroke="#666" stroke-width="1.500"/></svg></button>
        <button type="button" class="drop" aria-label="Grid and snaps"><svg viewBox="0 0 12 12"><path d="M1 1h10v10H1zM4.300 1v10M7.600 1v10M1 4.300h10M1 7.600h10" fill="#fff" stroke="#666"/></svg></button>
        <button type="button" class="drop" aria-label="Viewports"><svg viewBox="0 0 12 12"><path d="M.5 1.500h11v9H.5zM6 1.500v9M.5 6h11" fill="#ddd" stroke="#777"/></svg></button>
      </div>

      <div class="selection"><span>Multiple selections | 3</span><svg viewBox="0 0 12 12"><circle cx="6" cy="6" r="5.500" fill="#111"/><path d="M11.500 6v5.500H6z" fill="#111"/><path d="M3 7q3-5 5-3t-2 3q2 1 3-1" fill="none" stroke="#fff"/></svg></div>
      <div class="scrollbar"></div>
    </main>

    <footer class="timeline">
      <div class="player">
        <button type="button" aria-label="First"><svg viewBox="0 0 10 10"><path d="M1.500 1v8" stroke="#777" stroke-width="1.300"/><path d="M8.500 1v8L3 5z" fill="#777"/></svg></button>
        <button type="button" aria-label="Previous"><svg viewBox="0 0 10 10"><path d="M6 1.500v7L1 5zM7 3.500h2v3H7z" fill="#777"/></svg></button>
        <button type="button" aria-label="Play"><svg viewBox="0 0 10 10"><path d="M1.500 0v10L9 5z" fill="#666"/></svg></button>
        <button type="button" aria-label="Next"><svg viewBox="0 0 10 10"><path d="M4 1.500v7L9 5zM1 3.500h2v3H1z" fill="#777"/></svg></button>
        <button type="button" aria-label="Last"><svg viewBox="0 0 10 10"><path d="M8.500 1v8" stroke="#777" stroke-width="1.300"/><path d="M1.500 1v8L7 5z" fill="#777"/></svg></button>
      </div>
      <div class="track" id="track"></div>
      <svg class="marker" viewBox="0 0 8 24"><path d="M0 0h8v4L5 6v18H3V6L0 4z" fill="#333"/></svg>
      <button type="button" class="settings" aria-label="Timeline settings"><svg><use href="#i-gear"/></svg></button>
    </footer>
  </div>

  <script>
    // ground grid, drawn in perspective from the far corner and two vanishing points
    const corner = [684, 480];
    const vpRight = [2144, 324];
    const vpLeft = [-706, 278];

    function project(u, v) {
      const w = 1 - u - v;
      return [0, 1].map(i => ((corner[i] - u * vpRight[i] - v * vpLeft[i]) / w).toFixed(1)).join(" ");
    }

    function lines(stepU, stepV, skip) {
      let d = "";
      for (let i = -40; i <= 40; i++) {
        if (skip && i % skip === 0) continue;
        const u = 0.207 + i * stepU;
        const v = 0.1377 + i * stepV;
        if (u > 0 && u < 0.43) d += `M${project(u, 0)}L${project(u, 0.45)}`;
        if (v > 0 && v < 0.45) d += `M${project(0, v)}L${project(0.43, v)}`;
      }
      return d;
    }

    document.getElementById("gridMinor").setAttribute("d", lines(0.0056, 0.0055, 5));
    document.getElementById("gridMajor").setAttribute("d", lines(0.028, 0.0276, 0));
    document.getElementById("gridEdge").setAttribute("d", `M${project(0.43, 0)}L${project(0, 0)}L${project(0, 0.45)}`);

    // feature history
    const icons = {
      e: "extrude", c: "combine", t: "turn", m: "mirror", r: "remove", l: "rigid",
      v: "move", s: "sk", f: "fillet", d: "dots"
    };
    const history = "eectmmrlveeeclvemccc" + "sereceeserceccceeefevccsec" + "eccseccsffffrcfffdeecfcd";
    document.getElementById("track").innerHTML = [...history].map(k =>
      `<span class="step${k === "d" ? " folded" : ""}"><svg><use href="#i-${icons[k]}"/></svg></span>`
    ).join("");
  </script>
</body>
</html>
```
FILE: styles.css
```
*,
*::before,
*::after {
  box-sizing: border-box;
}
body {
  margin: 0;
  font-family: Roboto, "Noto Sans", sans-serif;
  font-size: 9px;
  line-height: 12px;
  color: #333;
}
button {
  display: inline-flex;
  align-items: center;
  justify-content: center;
  padding: 0;
  border: none;
  background: none;
  font: inherit;
  color: inherit;
  white-space: nowrap;
}
svg {
  display: block;
  flex: none;
}
.defs {
  position: absolute;
  width: 0;
  height: 0;
}
.app {
  display: flex;
  flex-direction: column;
  height: 100vh;
  overflow: hidden;
  background: #f4f4f4;
}
.caret,
.drop::after {
  content: "";
  border: 2px solid transparent;
  border-top: 3px solid #777;
  border-bottom: none;
  margin-left: 3px;
}

/* title bar */
.titlebar {
  display: flex;
  align-items: center;
  height: 16px;
  flex: none;
  padding: 0 12px 0 3px;
  background: #00b7c3;
  color: #0b2226;
}
.logo {
  width: 10px;
  height: 12px;
}
.app-title {
  margin-left: 4px;
  font-family: "Open Sans", "Noto Sans", sans-serif;
  font-size: 9px;
  line-height: 16px;
}
.win-buttons {
  display: flex;
  gap: 22px;
  margin-left: auto;
}
.win-buttons svg {
  width: 10px;
  height: 10px;
}

/* document bar */
.docbar {
  display: flex;
  height: 23px;
  flex: none;
  background: #f7f7f7;
  border-top: 2px solid #e3eeee;
}
.docbar svg {
  width: 12px;
  height: 12px;
}
.quick,
.account {
  display: flex;
  align-items: center;
  background: #dadada;
}
.quick {
  width: 160px;
  gap: 10px;
  padding: 0 5px;
}
.dim {
  opacity: .6;
}
.doctab {
  display: flex;
  flex: 1;
  align-items: center;
  gap: 3px;
  padding-right: 3px;
  font-family: "Liberation Sans", Arial, sans-serif;
  font-size: 8px;
}
.doctab > svg {
  margin-left: auto;
}
.doctab button {
  margin-left: auto;
}
.doctab button svg {
  width: 10px;
  height: 10px;
}
.account {
  width: 164px;
  gap: 11px;
  padding-left: 12px;
}
.account .add {
  margin-right: 7px;
}
.account .avatar svg {
  width: 18px;
  height: 18px;
}

/* ribbon */
.ribbon {
  display: flex;
  flex: none;
  height: 59px;
  padding-left: 8px;
  border-bottom: 1px solid #eee;
}
.workspace {
  width: 78px;
  height: 44px;
  margin-top: 7px;
  border: 1px solid #c4c4c4;
  border-radius: 3px;
  font-weight: 500;
}
.ribbon-main {
  display: flex;
  flex-direction: column;
}
.tabs {
  display: flex;
  gap: 13px;
  height: 17px;
  margin-left: 11px;
}
.tabs button {
  padding: 0 8px;
  border-bottom: 2px solid transparent;
  color: #555;
}
.tabs .active {
  border-bottom-color: #444;
}
.groups {
  display: flex;
}
.group {
  display: flex;
  flex-direction: column;
  align-items: center;
  height: 38px;
  padding: 0 4px;
  border-right: 1px solid #d6d6d6;
}
.group:first-child {
  margin-left: 2px;
}
.group.wide {
  padding: 0 7px;
}
.group.last {
  border: none;
}
.tools {
  display: flex;
  height: 27px;
}
.tools button {
  width: 30px;
}
.tools svg {
  width: 24px;
  height: 24px;
}
.menu {
  line-height: 14px;
  color: #555;
}

/* viewport */
.viewport {
  position: relative;
  flex: 1;
  min-height: 0;
  overflow: hidden;
  background: #fff;
}
.scene {
  position: absolute;
  inset: 0;
  width: 100%;
  height: 100%;
}
.grid-minor {
  fill: none;
  stroke: #f1f1f1;
}
.grid-major {
  fill: none;
  stroke: #cdcdcd;
}
.grid-edge {
  fill: none;
  stroke: #777;
}
.dims path {
  fill: #fff;
}
.dims text {
  font-size: 9px;
  text-anchor: middle;
  fill: #333;
}
.viewcube {
  position: absolute;
  top: 13px;
  right: 8px;
  width: 72px;
  height: 62px;
}
.viewcube text {
  font-size: 6px;
  text-anchor: middle;
  fill: #777;
}
.viewcube .axis {
  font-size: 9px;
}
.viewcube .y {
  fill: #7be58a;
}
.viewcube .z {
  fill: #44c;
}
.viewcube .x {
  fill: #f05a5a;
}

/* browser tree */
.browser {
  position: absolute;
  top: 3px;
  left: 3px;
  width: 210px;
}
.panel-head {
  display: flex;
  align-items: center;
  gap: 6px;
  height: 18px;
  padding: 0 6px 0 3px;
  border: 1px solid #e4e4e4;
  background: #f4f4f4;
}
.end {
  margin-left: auto;
}
.panel-head svg,
.arrange-head svg,
.comments svg {
  width: 10px;
  height: 10px;
}
.tree {
  margin: 0;
  padding: 1px 0 0 24px;
  list-style: none;
}
.tree li {
  display: flex;
  align-items: center;
  height: 17px;
}
.tree .root {
  margin-left: -13px;
}
.chev {
  width: 8px;
  height: 8px;
  margin-right: 7px;
}
.chev.open {
  transform: rotate(90deg);
  margin-right: 8px;
}
.eye {
  width: 12px;
  height: 10px;
  margin-right: 5px;
}
.node {
  display: flex;
  align-items: center;
  gap: 9px;
  height: 14px;
  padding: 0 6px 0 1px;
  background: #f5f5f5;
}
.node svg {
  width: 12px;
  height: 12px;
  color: #666;
}
.root .node {
  background: #d6d6d6;
}
.target {
  width: 10px;
  height: 10px;
  margin-left: 3px;
}
.marked {
  position: relative;
}
.marked::after {
  content: "";
  position: absolute;
  left: 0;
  right: 0;
  bottom: 0;
  height: 3px;
  background: repeating-linear-gradient(115deg, #1c86cc 0 2px, transparent 2px 4px);
}

/* arrange dialog */
.arrange {
  position: absolute;
  top: 87px;
  right: 2px;
  width: 455px;
  border: 1px solid #dcdcdc;
  background: #f4f4f4;
}
.arrange-head {
  display: flex;
  align-items: center;
  gap: 4px;
  height: 18px;
  padding: 0 3px 0 4px;
  border-bottom: 1px solid #e4e4e4;
}
.arrange-tabs {
  display: flex;
  height: 18px;
  font-size: 8px;
}
.arrange-tabs::after {
  content: "";
  flex: 1;
  border-bottom: 1px solid #aaa;
}
.arrange-tabs button {
  padding: 0 10px 0 4px;
  border-right: 1px solid #bbb;
  border-bottom: 1px solid #aaa;
}
.arrange-tabs .active {
  padding-right: 9px;
  border-bottom-color: transparent;
}
.arrange-body {
  padding: 1px 22px 0 6px;
}
.row {
  display: grid;
  grid-template-columns: 110px 1fr;
  align-items: center;
  height: 21px;
  padding-left: 2px;
}
.row.small {
  font-family: "Liberation Sans", Arial, sans-serif;
  font-size: 7px;
}
.combo {
  position: relative;
}
.combo svg {
  position: absolute;
  top: 4px;
  left: 3px;
  width: 10px;
  height: 10px;
}
.combo::after {
  content: "";
  position: absolute;
  top: 8px;
  right: 4px;
  border: 2px solid transparent;
  border-top: 3px solid #666;
  border-bottom: none;
}
.combo select {
  display: block;
  width: 100%;
  height: 18px;
  padding: 0 15px;
  border: 1px solid #ececec;
  appearance: none;
  background: #fff;
  font: inherit;
  color: inherit;
}
.picks,
.faces {
  display: flex;
  align-items: center;
  gap: 7px;
}
.picked {
  gap: 3px;
  height: 20px;
  width: 60px;
  border: 1px solid #5ba6cc;
  background: #d9eefa;
}
.picked svg,
.cur {
  width: 8px;
  height: 12px;
}
.clear svg,
.list button svg {
  width: 9px;
  height: 9px;
}
input[type="checkbox"] {
  display: flex;
  align-items: center;
  justify-content: center;
  width: 9px;
  height: 9px;
  margin: 0 0 0 3px;
  appearance: none;
  border: 1px solid #bbb;
  background: #fff;
}
input[type="checkbox"]:checked {
  border-color: #666;
  background: #666;
}
input[type="checkbox"]:checked::after {
  content: "";
  width: 4px;
  height: 6px;
  margin-bottom: 1px;
  border: solid #fff;
  border-width: 0 1px 1px 0;
  transform: rotate(40deg);
}
.list {
  display: flex;
  flex-direction: column;
  align-items: flex-start;
  justify-content: space-between;
  height: 150px;
  margin: 4px 0;
  padding-top: 1px;
  background: #fff;
}
.list table {
  width: 100%;
  table-layout: fixed;
  border-collapse: collapse;
}
.list th,
.list td {
  height: 18px;
  padding: 0;
  text-align: left;
  font-weight: 400;
}
.list th {
  font-weight: 500;
}
.c-icon {
  width: 33px;
}
.c-act {
  width: 30px;
}
.c-rot {
  width: 151px;
}
.c-name {
  width: auto;
}
.list .val {
  padding-left: 14px;
}
.cell {
  width: 12px;
  height: 12px;
  margin-left: 11px;
}
.rot {
  width: 9px;
  height: 9px;
  color: #1c6fae;
}
.rot.off {
  color: #b5c4cb;
}
.cur {
  margin-left: 1px;
}
.current {
  background: #dff1f8;
}
.list button {
  margin: 0 0 5px 6px;
}
.faces button {
  width: 16px;
  height: 18px;
  border: 1px solid transparent;
}
.faces .on {
  border-color: #86c5e6;
  background: #e2f2fb;
}
.faces svg,
.orb svg {
  width: 12px;
  height: 12px;
}
.faces {
  gap: 4px;
}
.orb {
  justify-self: start;
  margin-left: 2px;
}
.arrange-foot {
  display: flex;
  align-items: center;
  height: 26px;
  padding: 0 10px 0 4px;
  border-top: 1px solid #e0e0e0;
}
.info {
  width: 10px;
  height: 10px;
}
.arrange-foot label {
  margin: 0 auto 0 5px;
  font-size: 11px;
  color: #555;
}
.arrange-foot .big {
  width: 14px;
  height: 14px;
  margin-left: 7px;
}
.arrange-foot .big:checked {
  border: 1px solid #333;
  background: #ccc;
}
.arrange-foot .big:checked::after {
  width: 6px;
  height: 10px;
  border-color: #111;
  border-width: 0 2px 2px 0;
}
.arrange-foot button {
  height: 17px;
  padding: 0 8px;
  border: 1px solid #bcbcbc;
  background: #f8f8f8;
}
.arrange-foot button + button {
  margin-left: 10px;
}

/* bottom of viewport */
.comments {
  position: absolute;
  left: 3px;
  bottom: 4px;
  display: flex;
  align-items: center;
  justify-content: space-between;
  width: 210px;
  height: 17px;
  padding: 0 6px 0 19px;
  border: 1px solid #e8e8e8;
  background: #f4f4f4;
}
.navbar {
  position: absolute;
  left: 50%;
  bottom: 6px;
  display: flex;
  align-items: center;
  gap: 6px;
  height: 18px;
  padding: 0 2px;
  background: rgba(255, 255, 255, .9);
  transform: translateX(-50%);
}
.navbar svg {
  width: 12px;
  height: 12px;
}
.selection {
  position: absolute;
  right: 8px;
  bottom: 6px;
  display: flex;
  align-items: center;
  gap: 8px;
  font-weight: 500;
}
.selection svg {
  width: 12px;
  height: 12px;
}
.scrollbar {
  position: absolute;
  right: 4px;
  bottom: 0;
  width: 464px;
  height: 3px;
  background: #d9d9d9;
}

/* timeline */
.timeline {
  display: flex;
  flex: none;
  height: 33px;
  padding: 0 9px 0 6px;
}
.player {
  display: flex;
  align-items: center;
  gap: 8px;
  height: 37px;
}
.player svg {
  width: 10px;
  height: 10px;
}
.track {
  display: flex;
  flex: 1;
  height: 27px;
  margin-left: 11px;
  border-bottom: 1px solid #aaa;
}
.step {
  position: relative;
  display: flex;
  flex: 1;
  flex-direction: column;
  align-items: center;
  padding-top: 9px;
}
.step svg {
  width: 13px;
  height: 13px;
}
.step::after {
  content: "";
  width: 1px;
  height: 4px;
  margin-top: auto;
  background: #aaa;
}
.step.folded::after {
  position: absolute;
  bottom: -4px;
  width: 7px;
  height: 7px;
  border: 2px solid #777;
  background: #fff;
}
.marker {
  width: 8px;
  height: 24px;
  margin-top: 6px;
  margin-left: -4px;
}
.settings {
  height: 37px;
  margin-left: 9px;
  color: #777;
}
.settings svg {
  width: 12px;
  height: 12px;
}
```
